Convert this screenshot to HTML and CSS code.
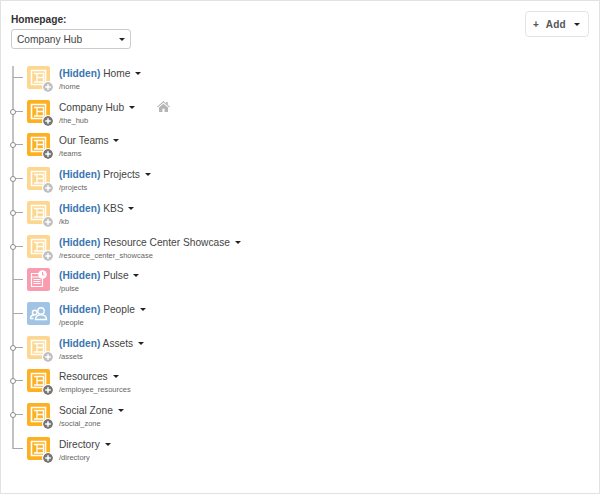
FILE: index.html
```html
<!DOCTYPE html>
<html lang="en">
<head>
<meta charset="utf-8">
<title>Site Tree</title>
<link rel="stylesheet" href="styles.css">
</head>
<body>
<svg class="defs" width="0" height="0" aria-hidden="true">
  <symbol id="page" viewBox="0 0 23 23">
    <rect class="page-bg" width="23" height="23" rx="2"/>
    <path fill="none" stroke="#fff" stroke-width="1.600" d="M4.500 4.500h14v14h-14z"/>
    <path fill="none" stroke="#fff" stroke-width="1.300" d="M10 7.500h6.500v8.500H10zM10 11.500h6.500M7 7.500h3M7 16h3"/>
  </symbol>
  <symbol id="pulse" viewBox="0 0 23 23">
    <rect width="23" height="23" rx="2" fill="#f99cb0"/>
    <path fill="none" stroke="#fff" stroke-width="1.200" d="M4.500 5.500h11v13h-11zM4.500 9h11M6.500 11.500h7M6.500 13.500h7M6.500 15.500h7"/>
    <circle cx="15.500" cy="6.500" r="4.300" fill="#fff"/>
    <path fill="none" stroke="#f99cb0" d="M15.500 4v3h2"/>
  </symbol>
  <symbol id="people" viewBox="0 0 23 23">
    <rect width="23" height="23" rx="2" fill="#a2c4e4"/>
    <g fill="none" stroke="#fff" stroke-width="1.400">
      <circle cx="14" cy="9" r="3.200"/>
      <path d="M8.500 17.500c0-3 2-4.600 5.500-4.600s5.500 1.600 5.500 4.600z"/>
      <circle cx="7.700" cy="10.500" r="2.300"/>
      <path d="M6.500 16.500H3.500c0-2.500 1.300-3.500 3.800-3.500"/>
    </g>
  </symbol>
  <symbol id="plus" viewBox="0 0 10 10">
    <circle cx="5" cy="5" r="5"/>
    <path stroke="#fff" stroke-width="1.500" d="M2.200 5h5.600M5 2.200v5.600"/>
  </symbol>
  <symbol id="home" viewBox="0 0 13 11">
    <path d="M6.500 0 0 5.700l.6.700 5.900-5 5.900 5 .6-.7-2.300-2V1H9v1.400zM2 6.600V11h3.400V7.800h2.200V11H11V6.600L6.500 2.800z"/>
  </symbol>
</svg>
<div class="frame">
  <header class="top">
    <div class="homepage">
      <label class="homepage-label">Homepage:</label>
      <div class="select"><span>Company Hub</span><i class="caret caret-sm"></i></div>
    </div>
    <button class="add"><span class="add-plus">+</span><span class="add-text">Add</span><i class="caret caret-sm"></i></button>
  </header>
  <ul class="tree">
    <li class="row hidden"><span class="branch"></span><span class="icon"><svg class="glyph"><use href="#page"/></svg><svg class="badge"><use href="#plus"/></svg></span><div class="info"><div class="name"><b>(Hidden)</b> Home <i class="caret"></i></div><div class="path">/home</div></div></li>
    <li class="row"><span class="branch"><i class="dot"></i></span><span class="icon"><svg class="glyph"><use href="#page"/></svg><svg class="badge"><use href="#plus"/></svg></span><div class="info"><div class="name">Company Hub <i class="caret"></i><svg class="home"><use href="#home"/></svg></div><div class="path">/the_hub</div></div></li>
    <li class="row"><span class="branch"><i class="dot"></i></span><span class="icon"><svg class="glyph"><use href="#page"/></svg><svg class="badge"><use href="#plus"/></svg></span><div class="info"><div class="name">Our Teams <i class="caret"></i></div><div class="path">/teams</div></div></li>
    <li class="row hidden"><span class="branch"><i class="dot"></i></span><span class="icon"><svg class="glyph"><use href="#page"/></svg><svg class="badge"><use href="#plus"/></svg></span><div class="info"><div class="name"><b>(Hidden)</b> Projects <i class="caret"></i></div><div class="path">/projects</div></div></li>
    <li class="row hidden"><span class="branch"><i class="dot"></i></span><span class="icon"><svg class="glyph"><use href="#page"/></svg><svg class="badge"><use href="#plus"/></svg></span><div class="info"><div class="name"><b>(Hidden)</b> KBS <i class="caret"></i></div><div class="path">/kb</div></div></li>
    <li class="row hidden"><span class="branch"><i class="dot"></i></span><span class="icon"><svg class="glyph"><use href="#page"/></svg><svg class="badge"><use href="#plus"/></svg></span><div class="info"><div class="name"><b>(Hidden)</b> Resource Center Showcase <i class="caret"></i></div><div class="path">/resource_center_showcase</div></div></li>
    <li class="row"><span class="branch"></span><span class="icon"><svg class="glyph"><use href="#pulse"/></svg></span><div class="info"><div class="name"><b>(Hidden)</b> Pulse <i class="caret"></i></div><div class="path">/pulse</div></div></li>
    <li class="row"><span class="branch"></span><span class="icon"><svg class="glyph"><use href="#people"/></svg></span><div class="info"><div class="name"><b>(Hidden)</b> People <i class="caret"></i></div><div class="path">/people</div></div></li>
    <li class="row hidden"><span class="branch"><i class="dot"></i></span><span class="icon"><svg class="glyph"><use href="#page"/></svg><svg class="badge"><use href="#plus"/></svg></span><div class="info"><div class="name"><b>(Hidden)</b> Assets <i class="caret"></i></div><div class="path">/assets</div></div></li>
    <li class="row"><span class="branch"><i class="dot"></i></span><span class="icon"><svg class="glyph"><use href="#page"/></svg><svg class="badge"><use href="#plus"/></svg></span><div class="info"><div class="name">Resources <i class="caret"></i></div><div class="path">/employee_resources</div></div></li>
    <li class="row"><span class="branch"><i class="dot"></i></span><span class="icon"><svg class="glyph"><use href="#page"/></svg><svg class="badge"><use href="#plus"/></svg></span><div class="info"><div class="name">Social Zone <i class="caret"></i></div><div class="path">/social_zone</div></div></li>
    <li class="row last"><span class="branch"></span><span class="icon"><svg class="glyph"><use href="#page"/></svg><svg class="badge"><use href="#plus"/></svg></span><div class="info"><div class="name">Directory <i class="caret"></i></div><div class="path">/directory</div></div></li>
  </ul>
</div>
</body>
</html>
```
FILE: styles.css
```css
html, body { margin: 0; padding: 0; background: #fff; }
body { font-family: "Liberation Sans", Arial, sans-serif; color: #3a3f44; width: 600px; height: 495px; overflow: hidden; }
.defs { position: absolute; }
.frame { box-sizing: border-box; height: 494px; border: 1px solid #e2e2e2; padding: 10px 10px 0 11px; }
.top { display: flex; justify-content: space-between; align-items: flex-start; }
.homepage-label { display: block; font-size: 10.2px; font-weight: 700; line-height: 15px; color: #333; margin-top: 1px; margin-left: -1px; }
.select { box-sizing: border-box; margin-top: 2px; margin-left: -1px; width: 120px; height: 20px; border: 1px solid #ccc; border-radius: 3px; display: flex; align-items: center; justify-content: space-between; padding: 0 5px 0 5px; font-size: 10.2px; color: #444; }
.add { box-sizing: border-box; width: 64px; height: 26px; background: #fff; border: 1px solid #e4e4e4; border-radius: 4px; display: flex; align-items: center; padding: 0 0 0 7px; font: 700 10px "Liberation Sans", Arial, sans-serif; color: #555; }
.add-plus { margin-right: 7px; }
.add-text { letter-spacing: .2px; margin-right: 8px; }
.caret { display: inline-block; width: 0; height: 0; border: 3.5px solid transparent; border-top-color: #222; border-bottom: 0; margin-left: 2px; vertical-align: 2px; }
.caret-sm { border-width: 3px 3px 0; margin-left: 0; }
.tree { list-style: none; margin: 17px 0 0; padding: 0; }
.row { display: flex; height: 33.73px; align-items: flex-start; }
.branch { position: relative; width: 15px; height: 100%; flex: none; }
.branch::before { content: ""; position: absolute; left: 0; top: 0; bottom: -1px; width: 2px; background: #c2c2c2; }
.branch::after { content: ""; position: absolute; left: 1px; top: 11px; width: 10px; height: 1px; background: #a8a8a8; }
.last .branch::before { height: 12px; bottom: auto; }
.dot { position: absolute; z-index: 1; left: -2px; top: 9px; box-sizing: border-box; width: 6px; height: 6px; border: 1px solid #8c8c8c; border-radius: 50%; background: #fff; }
.icon { position: relative; width: 23px; height: 23px; flex: none; }
.glyph { display: block; width: 23px; height: 23px; }
.page-bg { fill: #fdb022; }
.hidden .glyph { opacity: .5; }
.badge { position: absolute; left: 16px; top: 16px; width: 10px; height: 10px; fill: #777; border-radius: 50%; background: #fff; box-shadow: 0 0 0 1px #fff; }
.hidden .badge { fill: #c0c0c0; }
.info { margin-left: 9px; padding-top: 1px; }
.name { font-size: 10.2px; line-height: 14px; color: #444; white-space: nowrap; }
.name b { font-weight: 700; color: #3a76b0; }
.path { font-size: 7.5px; line-height: 10px; margin-top: 1px; color: #666; }
.home { width: 13px; height: 11px; margin-left: 22px; fill: #b5b5b5; vertical-align: -1px; }
```
